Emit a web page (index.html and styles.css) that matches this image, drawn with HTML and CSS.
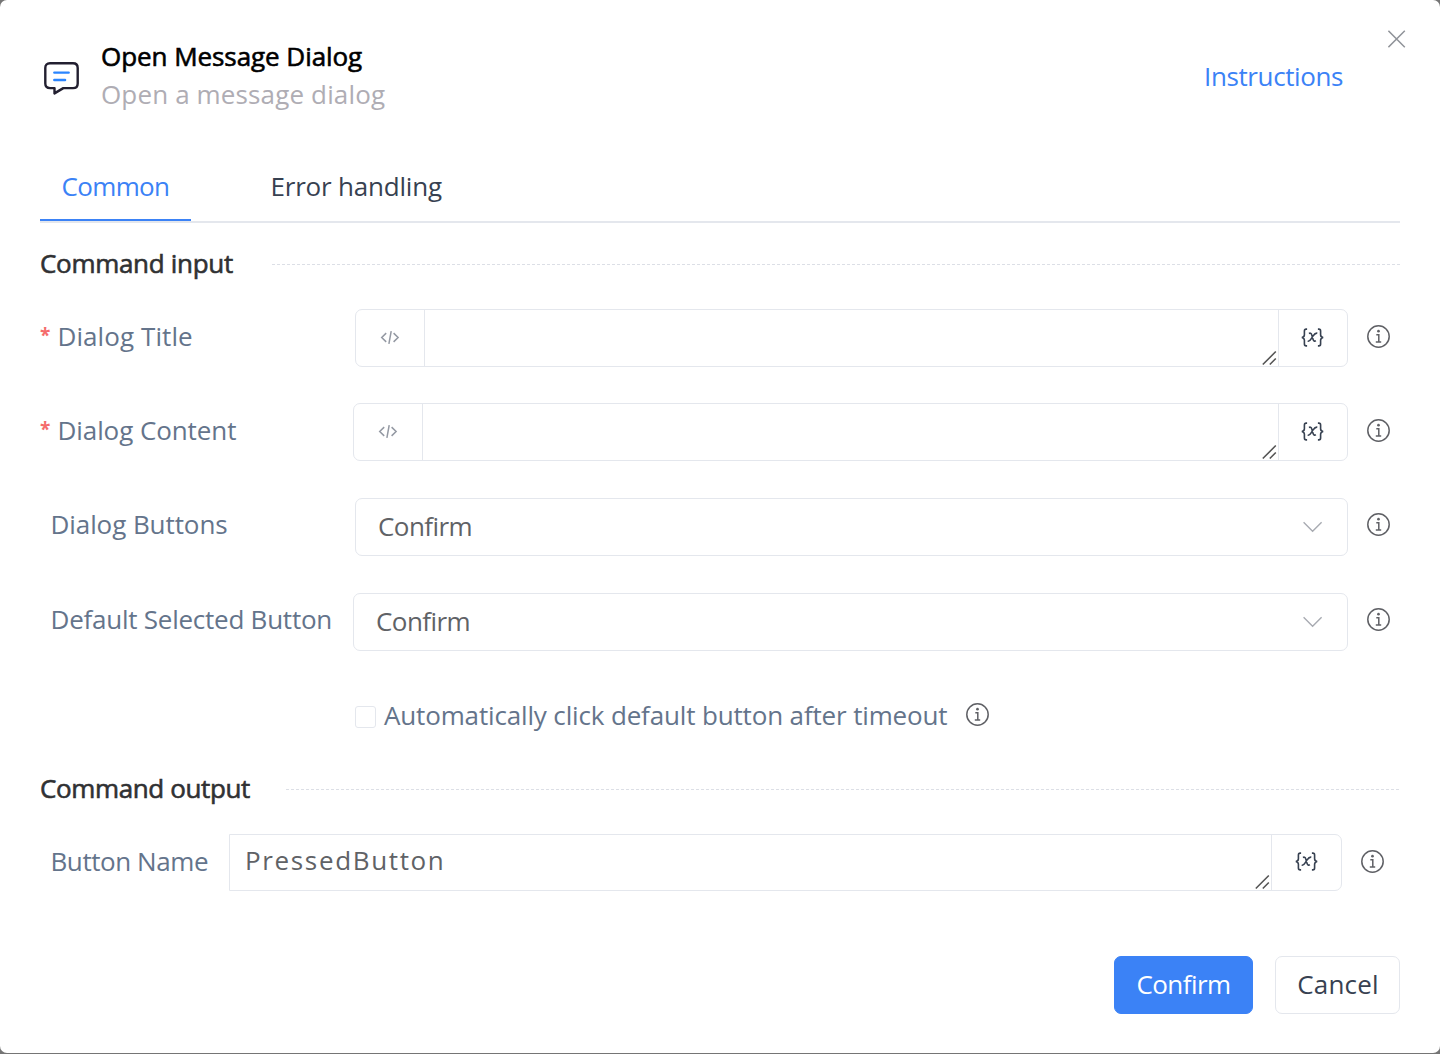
FILE: index.html
```html
<!DOCTYPE html>
<html lang="en">
<head>
<meta charset="utf-8">
<title>Open Message Dialog</title>
<link rel="stylesheet" href="styles.css">
</head>
<body>
<svg class="symbols" aria-hidden="true">
  <symbol id="info" viewBox="0 0 24 24">
    <circle cx="11.5" cy="11.5" r="10.7" fill="none" stroke="currentColor" stroke-width="1.5"/>
    <circle cx="11.5" cy="6.2" r="1.35" fill="currentColor"/>
    <path d="M9.3 9.8h2.5v7M8.8 16.9h5.4" fill="none" stroke="currentColor" stroke-width="1.5"/>
  </symbol>
  <symbol id="code" viewBox="0 0 20 16">
    <path d="M6.2 3.1L1.7 7.5l4.5 4.4M13.6 3.1L18.1 7.5l-4.5 4.4M11.2 1.2L8.9 13.8" fill="none" stroke="currentColor" stroke-width="1.5"/>
  </symbol>
  <symbol id="variable" viewBox="0.5 0.5 24 20">
    <path d="M6.6 1.6H5.6Q3.9 1.6 3.9 3.4V7.2Q3.9 9.6 1.3 10Q3.9 10.4 3.9 12.8V16.6Q3.9 18.4 5.6 18.4H6.6M17.4 1.6H18.4Q20.1 1.6 20.1 3.4V7.2Q20.1 9.6 22.7 10Q20.1 10.4 20.1 12.8V16.6Q20.1 18.4 18.4 18.4H17.4" fill="none" stroke="currentColor" stroke-width="1.6"/>
    <path d="M8.4 5.9Q10.7 5 11.3 7.6L12.5 11.8Q13.2 14.4 15.4 13.2M16.8 5.7Q14.8 5.2 12.4 8.6L11 10.8Q9 14.2 7.2 13.6" fill="none" stroke="currentColor" stroke-width="1.6"/>
  </symbol>
  <symbol id="grip" viewBox="0 0 16 16">
    <path d="M.8 14.5L13.8 1.5M7.8 14.5L13.8 8.5" fill="none" stroke="currentColor" stroke-width="1.6"/>
  </symbol>
  <symbol id="chevron" viewBox="0 0 20 12">
    <path d="M.6 1.2L9.6 10.2L18.6 1.2" fill="none" stroke="currentColor" stroke-width="1.4"/>
  </symbol>
</svg>
<main class="dialog">
  <header class="header">
    <svg class="header-icon" viewBox="0.5 -0.6 36 36">
      <path d="M6.5 2.7H29.5Q34.2 2.7 34.2 7.4V22.8Q34.2 27.5 29.5 27.5H19.8L11 32.8V27.5H6.5Q1.8 27.5 1.8 22.8V7.4Q1.8 2.7 6.5 2.7Z" fill="none" stroke="#221f30" stroke-width="2.4" stroke-linejoin="round"/>
      <path d="M10.8 12H25.2M10.8 19.4H21.6" stroke="#2b85ff" stroke-width="2.4" stroke-linecap="round"/>
    </svg>
    <div class="heading">
      <h1 class="title">Open Message Dialog</h1>
      <p class="subtitle">Open a message dialog</p>
    </div>
    <a class="instructions">Instructions</a>
    <svg class="close" viewBox="0 0 18 18"><path d="M.4 .8L16.8 17.2M16.8 .8L.4 17.2" stroke="#909399" stroke-width="1.5"/></svg>
  </header>

  <nav class="tabs">
    <a class="tab tab-active">Common</a>
    <a class="tab">Error handling</a>
  </nav>

  <section class="inputs">
    <div class="section-head"><h2 class="section-title input-title">Command input</h2><span class="rule"></span></div>
    <div class="row">
      <label class="label label-title"><span class="star">*</span>Dialog Title</label>
      <div class="field">
        <span class="cell"><svg class="code"><use href="#code"/></svg></span>
        <div class="textarea"><svg class="grip"><use href="#grip"/></svg></div>
        <span class="cell"><svg class="variable"><use href="#variable"/></svg></span>
      </div>
      <svg class="info"><use href="#info"/></svg>
    </div>
    <div class="row">
      <label class="label label-wide"><span class="star">*</span>Dialog Content</label>
      <div class="field">
        <span class="cell"><svg class="code"><use href="#code"/></svg></span>
        <div class="textarea"><svg class="grip"><use href="#grip"/></svg></div>
        <span class="cell"><svg class="variable"><use href="#variable"/></svg></span>
      </div>
      <svg class="info"><use href="#info"/></svg>
    </div>
    <div class="row">
      <label class="label label-plain">Dialog Buttons</label>
      <div class="field select"><span class="value">Confirm</span><svg class="chevron"><use href="#chevron"/></svg></div>
      <svg class="info info-high"><use href="#info"/></svg>
    </div>
    <div class="row">
      <label class="label label-plain label-wide label-default">Default Selected Button</label>
      <div class="field select"><span class="value">Confirm</span><svg class="chevron"><use href="#chevron"/></svg></div>
      <svg class="info info-high"><use href="#info"/></svg>
    </div>
    <div class="check-row">
      <span class="checkbox"></span>
      <span class="check-label">Automatically click default button after timeout</span>
      <svg class="info check-info"><use href="#info"/></svg>
    </div>
  </section>

  <section class="outputs">
    <div class="section-head"><h2 class="section-title output-title">Command output</h2><span class="rule"></span></div>
    <div class="row output-row">
      <label class="label label-plain label-output">Button Name</label>
      <div class="field field-output">
        <div class="textarea"><span class="output-value">PressedButton</span><svg class="grip"><use href="#grip"/></svg></div>
        <span class="cell"><svg class="variable"><use href="#variable"/></svg></span>
      </div>
      <svg class="info"><use href="#info"/></svg>
    </div>
  </section>

  <footer class="footer">
    <button class="button primary">Confirm</button>
    <button class="button secondary">Cancel</button>
  </footer>
</main>
</body>
</html>
```
FILE: styles.css
```css
* { box-sizing: border-box; }
body {
  margin: 0;
  background: #757575;
  font: 26px/38px "Open Sans", "Noto Sans", sans-serif;
  color: #374151;
}
svg { display: block; flex: none; }
h1, h2, p { margin: 0; font-size: inherit; font-weight: 400; }
.symbols { display: none; }

.dialog {
  width: 1440px;
  height: 1053px;
  padding: 0 40px;
  background: #fff;
  border-radius: 7px;
}

.header {
  display: flex;
  height: 151px;
  margin-right: -6px;
  padding-top: 30px;
}
.header-icon { width: 36px; height: 36px; margin: 30px 21px 0 4px; }
.heading { padding-top: 7px; white-space: nowrap; }
.title {
  color: #000;
  letter-spacing: -.06px;
  -webkit-text-stroke: .6px currentColor;
}
.subtitle { color: #afadb4; letter-spacing: .14px; }
.instructions {
  margin: 27px 45px 0 auto;
  color: #3b82f6;
  letter-spacing: -.4px;
}
.close { width: 18px; height: 18px; }

.tabs {
  display: flex;
  gap: 58px;
  height: 72px;
  border-bottom: 2px solid #e4e7ed;
}
.tab {
  height: 70px;
  padding: 16px 20px 0 21.5px;
  letter-spacing: -.2px;
}
.tab-active {
  width: 151px;
  padding-left: 21.5px;
  border-bottom: 2px solid #3b82f6;
  color: #3b82f6;
  letter-spacing: -.65px;
}

.section-head {
  display: flex;
  align-items: center;
  height: 38px;
}
.inputs .section-head { margin: 21px 0 27px; }
.outputs .section-head { margin: 35px 0 27px; }
.section-title {
  color: #303133;
  white-space: nowrap;
  -webkit-text-stroke: .6px currentColor;
}
.input-title { width: 230px; letter-spacing: -.3px; }
.output-title { width: 246px; letter-spacing: -.37px; }
.rule {
  flex: 1;
  height: 1px;
  margin-top: 3px;
  background: repeating-linear-gradient(90deg, #dcdfe6 0 3px, transparent 3px 5px);
}
.input-title + .rule { background-position: -3px 0; }

.row {
  display: flex;
  height: 58px;
  margin-bottom: 37px;
}
.row:nth-child(2) { margin-bottom: 36px; }
.label {
  display: flex;
  width: 315px;
  padding-top: 8px;
  color: #64748b;
  letter-spacing: -.08px;
  white-space: nowrap;
}
.label-title { letter-spacing: .08px; }
.label-wide { width: 313px; }
.label-plain { padding: 7px 0 0 10.5px; }
.label-default { letter-spacing: -.24px; }
.star {
  width: 17.5px;
  color: #f56c6c;
  font-size: 19px;
  font-weight: 700;
  line-height: 36px;
}

.field {
  display: flex;
  flex: 1;
  border: 1px solid #e4e7ed;
  border-radius: 7px;
}
.cell {
  display: flex;
  align-items: center;
  justify-content: center;
  width: 68px;
  color: #374151;
}
.code { width: 20px; height: 16px; color: #9499a3; }
.variable { width: 24px; height: 20px; }
.textarea {
  display: flex;
  flex: 1;
  align-items: flex-end;
  justify-content: flex-end;
  border: solid #e4e7ed;
  border-width: 0 1px;
}
.grip { width: 16px; height: 16px; color: #555; }
.info { width: 24px; height: 24px; margin: 16px 9px 0 19px; color: #5f6065; }
.info-high { margin-top: 15px; }

.select {
  align-items: center;
  justify-content: space-between;
  padding: 0 24px 0 22px;
  color: #606266;
}
.value { padding-bottom: 2px; letter-spacing: -.55px; }
.chevron { width: 20px; height: 12px; color: #a8abb2; }

.check-row {
  display: flex;
  height: 38px;
  margin-top: 45px;
  padding-left: 315px;
  color: #64748b;
}
.checkbox {
  width: 21px;
  height: 22px;
  margin: 10px 8px 0 0;
  border: 1px solid #e4e7ed;
  border-radius: 3px;
}
.check-label { letter-spacing: -.15px; white-space: nowrap; }
.check-info { margin-top: 7px; margin-left: 19px; }

.output-row { height: 57px; margin: 0; }
.label-output { width: 189px; padding-top: 8px; letter-spacing: -.43px; }
.field-output { border-radius: 0 7px 7px 0; }
.field-output .textarea { border-left: 0; }
.field-output .cell { width: 69px; padding-bottom: 2px; }
.output-value {
  flex: 1;
  align-self: flex-start;
  padding: 6px 0 0 15px;
  color: #606266;
  letter-spacing: 1.65px;
}
.output-row .info { margin-right: 15px; }

.footer {
  display: flex;
  justify-content: flex-end;
  gap: 22px;
  margin-top: 65px;
}
.button {
  height: 58px;
  padding: 0 0 2px;
  border: 1px solid #e4e7ed;
  border-radius: 7px;
  background: #fff;
  color: inherit;
  font: inherit;
}
.primary {
  width: 139px;
  border-color: #3b82f6;
  background: #3b82f6;
  color: #fff;
  letter-spacing: -.55px;
}
.secondary { width: 125px; padding-left: 1px; letter-spacing: .15px; }
```
